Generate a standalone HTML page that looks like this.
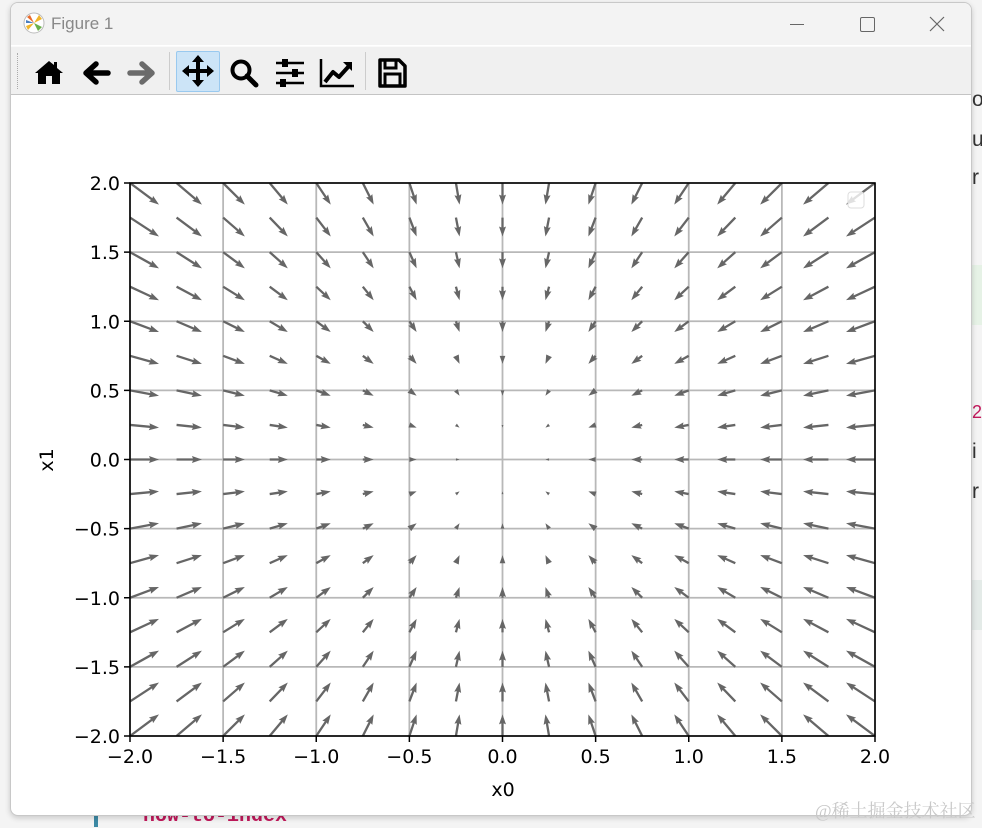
<!DOCTYPE html>
<html><head><meta charset="utf-8"><style>
html,body{margin:0;padding:0;width:982px;height:827px;overflow:hidden;background:#f4f4f4;font-family:"DejaVu Sans","Liberation Sans",sans-serif}
#win{position:absolute;left:10px;top:2px;width:960px;height:812px;border:1px solid #c8c8c8;border-radius:8px;background:#fff;overflow:hidden;box-shadow:0 2px 6px rgba(0,0,0,.18)}
#title{position:absolute;left:0;top:0;width:960px;height:42px;background:#f3f3f3}
#tb{position:absolute;left:0;top:43px;width:960px;height:47px;background:#f0f0f0;border-top:1px solid #fafafa;border-bottom:1px solid #c4c4c4}
.side{position:absolute;font-family:"Liberation Sans","Noto Sans CJK SC",sans-serif;font-size:21px;color:#333}
</style></head><body>
<div class="side" style="left:972px;top:88px">o</div>
<div class="side" style="left:972px;top:128px">u</div>
<div class="side" style="left:972px;top:166px">r</div>
<div style="position:absolute;left:972px;top:265px;width:10px;height:60px;background:#e6f2e6"></div>
<div class="side" style="left:972px;top:402px;color:#c2185b;font-size:18px">2</div>
<div class="side" style="left:972px;top:440px">i</div>
<div class="side" style="left:972px;top:480px">r</div>
<div style="position:absolute;left:972px;top:580px;width:10px;height:50px;background:#e4ebe8"></div>
<div style="position:absolute;left:94px;top:814px;width:4px;height:13px;background:#3d8aa5"></div>
<div style="position:absolute;left:143px;top:805px;font-family:'Liberation Mono',monospace;font-size:20px;color:#c2185b;font-weight:bold">now-to-index</div>
<div id="win">
 <div id="title">
  <svg style="position:absolute;left:12px;top:9px" width="22" height="22" viewBox="0 0 22 22"><circle cx="11" cy="11" r="10" fill="#fff" stroke="#bbb"/><path d="M11 11 L4 5 L7 3Z" fill="#e86a2c"/><path d="M11 11 L16 3 L19 7Z" fill="#f0b429"/><path d="M11 11 L3 14 L5 18Z" fill="#f0b429"/><path d="M11 11 L15 19 L19 15Z" fill="#6bb04a"/><path d="M11 11 L3 8 L3 11Z" fill="#4a7fc1"/></svg>
  <div style="position:absolute;left:40px;top:11px;font-family:'Liberation Sans',sans-serif;font-size:17px;color:#888">Figure 1</div>
  <div style="position:absolute;left:779px;top:21px;width:14px;height:1px;background:#666"></div>
  <div style="position:absolute;left:849px;top:14px;width:13px;height:13px;border:1px solid #666;border-radius:2px"></div>
  <svg style="position:absolute;left:918px;top:13px" width="16" height="16"><path d="M1 1L15 15M15 1L1 15" stroke="#666" stroke-width="1.2"/></svg>
 </div>
 <div id="tb">
  <div style="position:absolute;left:6px;top:6px;height:36px;border-left:1px dotted #aaa"></div>
  <svg style="position:absolute;left:22px;top:11px" width="32" height="28" viewBox="0 0 32 28"><path d="M16 3 L2 15 L5 15 L5 26 L13 26 L13 18 L19 18 L19 26 L27 26 L27 15 L30 15 L24 10 L24 4 L21 4 L21 7Z" fill="#000"/></svg>
  <svg style="position:absolute;left:70px;top:12px" width="30" height="28" viewBox="0 0 30 28"><path d="M27 14 L8 14 M15 5 L5 14 L15 23" stroke="#000" stroke-width="5.5" fill="none" stroke-linecap="round" stroke-linejoin="round"/></svg>
  <svg style="position:absolute;left:116px;top:12px" width="30" height="28" viewBox="0 0 30 28"><path d="M3 14 L22 14 M15 5 L25 14 L15 23" stroke="#6b6b6b" stroke-width="5.5" fill="none" stroke-linecap="round" stroke-linejoin="round"/></svg>
  <div style="position:absolute;left:158px;top:5px;height:38px;border-left:1px solid #ccc"></div>
  <div style="position:absolute;left:165px;top:4px;width:44px;height:41px;background:#cce4f7;border:1px solid #99c9ef;box-sizing:border-box;border-radius:2px"></div>
  <svg style="position:absolute;left:170px;top:7px" width="34" height="34" viewBox="0 0 34 34"><path d="M17 3 V31 M3 17 H31" stroke="#000" stroke-width="4"/><path d="M17 1 L23 8 L11 8Z M17 33 L23 26 L11 26Z M1 17 L8 11 L8 23Z M33 17 L26 11 L26 23Z" fill="#000"/></svg>
  <svg style="position:absolute;left:217px;top:10px" width="32" height="32" viewBox="0 0 32 32"><circle cx="13" cy="13" r="8.5" stroke="#000" stroke-width="4" fill="none"/><path d="M19 19 L28 28" stroke="#000" stroke-width="5" stroke-linecap="round"/></svg>
  <svg style="position:absolute;left:263px;top:11px" width="32" height="30" viewBox="0 0 32 30"><path d="M2 5H30M2 15H30M2 25H30" stroke="#000" stroke-width="2.5"/><rect x="8" y="1" width="6" height="8" fill="#000"/><rect x="18" y="11" width="6" height="8" fill="#000"/><rect x="6" y="21" width="6" height="8" fill="#000"/></svg>
  <svg style="position:absolute;left:308px;top:10px" width="36" height="32" viewBox="0 0 36 32"><path d="M2 2 V29 H35" stroke="#000" stroke-width="2.5" fill="none"/><path d="M6 25 L14 15 L20 20 L30 9" stroke="#000" stroke-width="4" fill="none" stroke-linejoin="round"/><path d="M33 5 L33 14 L24 5Z" fill="#000"/></svg>
  <div style="position:absolute;left:354px;top:5px;height:38px;border-left:1px solid #ccc"></div>
  <svg style="position:absolute;left:366px;top:10px" width="30" height="32" viewBox="0 0 30 32"><path d="M3 3 H22 L28 9 V29 H3Z" stroke="#000" stroke-width="3.5" fill="none" stroke-linejoin="round"/><rect x="8" y="3" width="11" height="8" fill="none" stroke="#000" stroke-width="3"/><rect x="8" y="17" width="15" height="12" fill="none" stroke="#000" stroke-width="3"/></svg>
 </div>
</div>
<svg id="plot" style="position:absolute;left:0;top:0" width="982" height="827"></svg>
<div style="position:absolute;left:815px;top:797px;font-family:'Liberation Serif','Noto Serif CJK SC',serif;font-size:18px;color:#c8c8c8">@稀土掘金技术社区</div>
<script>
var s=document.getElementById('plot'),h='';
var X0=130,X1=875,Y0=183,Y1=736;
function px(x){return X0+(x+2)*(X1-X0)/4}
function py(y){return Y1-(y+2)*(Y1-Y0)/4}
var F='font-size="19" font-family="DejaVu Sans,sans-serif"';
h+='<defs><clipPath id="c"><rect x="'+X0+'" y="'+Y0+'" width="'+(X1-X0)+'" height="'+(Y1-Y0)+'"/></clipPath></defs>';
for(var v=-2;v<=2.001;v+=0.5){
 h+='<line x1="'+px(v)+'" y1="'+Y0+'" x2="'+px(v)+'" y2="'+Y1+'" stroke="#b8b8b8" stroke-width="1.8"/>';
 h+='<line x1="'+X0+'" y1="'+py(v)+'" x2="'+X1+'" y2="'+py(v)+'" stroke="#b8b8b8" stroke-width="1.8"/>';
 var lab=(v<0?'\u2212':'')+Math.abs(v).toFixed(1);
 h+='<line x1="'+px(v)+'" y1="'+Y1+'" x2="'+px(v)+'" y2="'+(Y1+6)+'" stroke="#000" stroke-width="1.5"/>';
 h+='<line x1="'+X0+'" y1="'+py(v)+'" x2="'+(X0-6)+'" y2="'+py(v)+'" stroke="#000" stroke-width="1.5"/>';
 h+='<text x="'+px(v)+'" y="'+(Y1+27)+'" text-anchor="middle" '+F+'>'+lab+'</text>';
 h+='<text x="'+(X0-10)+'" y="'+(py(v)+7)+'" text-anchor="end" '+F+'>'+lab+'</text>';
}
var g='<g clip-path="url(#c)" fill="#666">';
for(var i=0;i<17;i++)for(var j=0;j<17;j++){
 var x=-2+i*0.25,y=-2+j*0.25;
 var dx=-14.5*x,dy=10.8*y,L=Math.sqrt(dx*dx+dy*dy);
 if(L<0.5)continue;
 var a=Math.atan2(dy,dx)*180/Math.PI,hl=10,hal=9,hw=7,sw=2.3,p;
 if(L<hl){var k=L/hl;p='0,'+(-hw*k/2)+' '+L+',0 0,'+(hw*k/2);}
 else p='0,'+(-sw/2)+' '+(L-hal)+','+(-sw/2)+' '+(L-hl)+','+(-hw/2)+' '+L+',0 '+(L-hl)+','+(hw/2)+' '+(L-hal)+','+(sw/2)+' 0,'+(sw/2);
 g+='<polygon points="'+p+'" transform="translate('+px(x)+','+py(y)+') rotate('+a+')"/>';
}
g+='</g>';
h+=g;
h+='<rect x="'+X0+'" y="'+Y0+'" width="'+(X1-X0)+'" height="'+(Y1-Y0)+'" fill="none" stroke="#000" stroke-width="1.6"/>';
h+='<rect x="848" y="192" width="16" height="16" rx="3" fill="rgba(255,255,255,0.8)" stroke="#ddd"/>';
h+='<text x="503" y="796" text-anchor="middle" '+F+'>x0</text>';
h+='<text transform="translate(53,460) rotate(-90)" text-anchor="middle" '+F+'>x1</text>';
s.innerHTML=h;
</script>
</body></html>
